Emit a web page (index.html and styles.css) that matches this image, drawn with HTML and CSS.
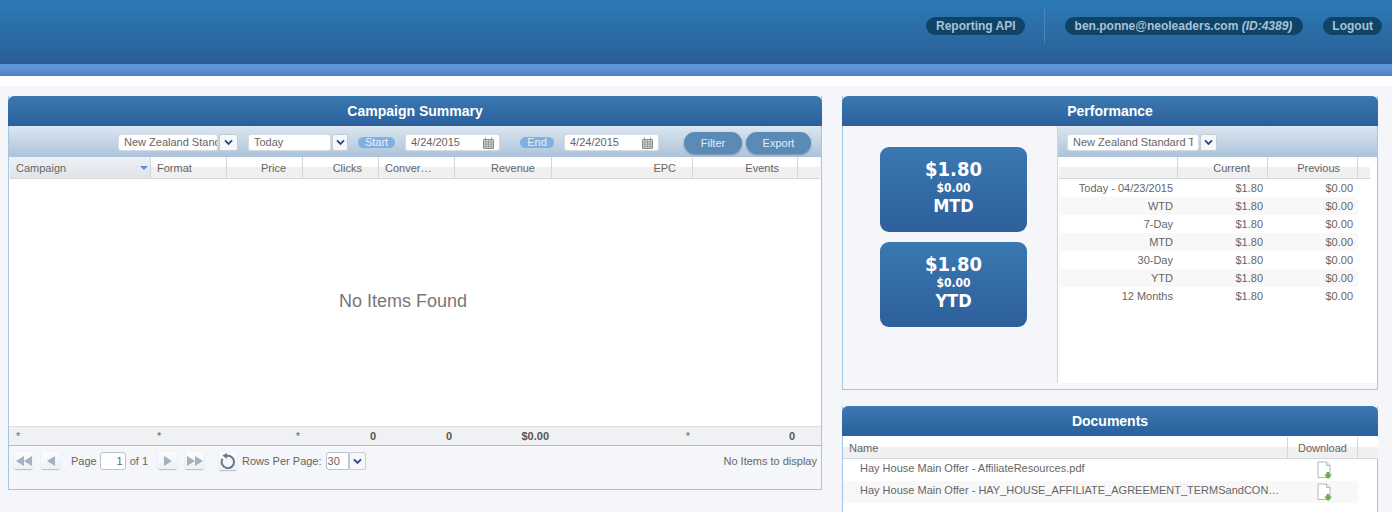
FILE: index.html
```html
<!DOCTYPE html>
<html lang="en">
<head>
<meta charset="utf-8">
<title>Dashboard</title>
<link rel="stylesheet" href="styles.css">
</head>
<body>
<svg class="defs" width="0" height="0" aria-hidden="true">
  <symbol id="chev" viewBox="0 0 10 8"><path d="M1 1.500l4 4 4-4" fill="none" stroke="#2b4a7e" stroke-width="2.200"/></symbol>
  <symbol id="cal" viewBox="0 0 11 12">
    <path d="M.5 2.500h10v9H.5z" fill="#d8d8d4" stroke="#8b9189"/>
    <path d="M2.500 0.500v2M8.500 0.500v2" stroke="#8b9189"/>
    <path d="M.5 5h10M.5 7.200h10M.5 9.400h10M3 3v8.500M5.500 3v8.500M8 3v8.500" stroke="#8b9189" stroke-width=".7"/>
  </symbol>
  <symbol id="doc" viewBox="0 0 16 19">
    <path d="M1 1h8.500l3.500 3.500V16.500H1z" fill="#fff" stroke="#b4b8b4"/>
    <path d="M9.500 1v3.500H13" fill="#f0f0f0" stroke="#b4b8b4"/>
    <path d="M9.500 11h3v2.500h2.500l-4 4.500-4-4.500h2.500z" fill="#6aaa4a"/>
  </symbol>
</svg>
<header class="topbar">
  <nav class="topnav">
    <a class="pill pill-api">Reporting API</a>
    <span class="topsep"></span>
    <a class="pill pill-user">ben.ponne@neoleaders.com <em>(ID:4389)</em></a>
    <a class="pill pill-last">Logout</a>
  </nav>
</header>
<div class="band"></div>
<div class="gap"></div>
<main class="page">
  <section class="panel panel-campaign">
    <h2 class="panel-title">Campaign Summary</h2>
    <div class="toolbar">
      <span class="select sel-tz"><span class="select-val">New Zealand Standard Time</span></span>
      <span class="drop drop-tz"><svg class="chev"><use href="#chev"/></svg></span>
      <span class="select sel-range"><span class="select-val">Today</span></span>
      <span class="drop drop-narrow"><svg class="chev"><use href="#chev"/></svg></span>
      <span class="tag tag-start">Start</span>
      <span class="date"><span>4/24/2015</span><svg class="cal"><use href="#cal"/></svg></span>
      <span class="tag tag-end">End</span>
      <span class="date"><span>4/24/2015</span><svg class="cal"><use href="#cal"/></svg></span>
      <button class="btn btn-filter">Filter</button>
      <button class="btn btn-export">Export</button>
    </div>
    <div class="grid-row grid-head">
      <div class="hcell hcell-sort">Campaign<i class="sort"></i></div>
      <div class="hcell">Format</div>
      <div class="hcell r">Price</div>
      <div class="hcell r">Clicks</div>
      <div class="hcell">Conver…</div>
      <div class="hcell r">Revenue</div>
      <div class="hcell r">EPC</div>
      <div class="hcell r hcell-events">Events</div>
      <div class="hcell hcell-end"></div>
    </div>
    <div class="empty">No Items Found</div>
    <div class="grid-row grid-foot">
      <div class="fcell star">*</div>
      <div class="fcell star">*</div>
      <div class="fcell star r">*</div>
      <div class="fcell r">0</div>
      <div class="fcell r">0</div>
      <div class="fcell r">$0.00</div>
      <div class="fcell star r">*</div>
      <div class="fcell r">0</div>
      <div class="fcell"></div>
    </div>
    <div class="pager">
      <span class="pg"><svg width="16" height="10" viewBox="0 0 16 10"><path d="M8 0v10L0 5zM16 0v10L8 5z" fill="#a3b1c2"/></svg></span>
      <span class="pg"><svg width="8" height="10" viewBox="0 0 8 10"><path d="M8 0v10L0 5z" fill="#a3b1c2"/></svg></span>
      <span class="pg-label">Page</span>
      <span class="pg-input">1</span>
      <span class="pg-of">of 1</span>
      <span class="pg"><svg width="8" height="10" viewBox="0 0 8 10"><path d="M0 0v10l8-5z" fill="#a3b1c2"/></svg></span>
      <span class="pg"><svg width="16" height="10" viewBox="0 0 16 10"><path d="M0 0v10l8-5zM8 0v10l8-5z" fill="#a3b1c2"/></svg></span>
      <span class="pg pg-refresh"><svg width="16" height="16" viewBox="0 0 16 16"><path d="M5.500 3.200a6.200 6.200 0 1 1-3 2.600" fill="none" stroke="#66788c" stroke-width="2"/><path d="M7 0v6L2.500 2.600z" fill="#66788c"/></svg></span>
      <span class="pg-rows">Rows Per Page:</span>
      <span class="pg-size">30</span>
      <span class="drop drop-size"><svg class="chev"><use href="#chev"/></svg></span>
      <span class="pg-info">No Items to display</span>
    </div>
  </section>

  <div class="side">
    <section class="panel panel-perf">
      <h2 class="panel-title">Performance</h2>
      <div class="perf-body">
        <div class="stats">
          <div class="stat"><b class="stat-main">$1.80</b><b class="stat-sub">$0.00</b><b class="stat-name">MTD</b></div>
          <div class="stat"><b class="stat-main">$1.80</b><b class="stat-sub">$0.00</b><b class="stat-name">YTD</b></div>
        </div>
        <div class="perf-table">
          <div class="toolbar toolbar-perf">
            <span class="select sel-perf"><span class="select-val">New Zealand Standard Time</span></span>
            <span class="drop"><svg class="chev"><use href="#chev"/></svg></span>
          </div>
          <div class="perf-row perf-head">
            <div class="hcell"></div>
            <div class="hcell r">Current</div>
            <div class="hcell r">Previous</div>
            <div class="hcell hcell-end"></div>
          </div>
          <div class="perf-row"><span>Today - 04/23/2015</span><span>$1.80</span><span>$0.00</span></div>
          <div class="perf-row alt"><span>WTD</span><span>$1.80</span><span>$0.00</span></div>
          <div class="perf-row"><span>7-Day</span><span>$1.80</span><span>$0.00</span></div>
          <div class="perf-row alt"><span>MTD</span><span>$1.80</span><span>$0.00</span></div>
          <div class="perf-row"><span>30-Day</span><span>$1.80</span><span>$0.00</span></div>
          <div class="perf-row alt"><span>YTD</span><span>$1.80</span><span>$0.00</span></div>
          <div class="perf-row"><span>12 Months</span><span>$1.80</span><span>$0.00</span></div>
        </div>
      </div>
    </section>

    <section class="panel panel-docs">
      <h2 class="panel-title">Documents</h2>
      <div class="doc-row doc-head">
        <div class="hcell">Name</div>
        <div class="hcell c">Download</div>
        <div class="hcell hcell-end"></div>
      </div>
      <div class="doc-row"><span class="doc-name">Hay House Main Offer - AffiliateResources.pdf</span><svg class="doc-ico"><use href="#doc"/></svg></div>
      <div class="doc-row alt"><span class="doc-name">Hay House Main Offer - HAY_HOUSE_AFFILIATE_AGREEMENT_TERMSandCONDITIONS.pdf</span><svg class="doc-ico"><use href="#doc"/></svg></div>
    </section>
  </div>
</main>
</body>
</html>
```

FILE: styles.css
```css
* { box-sizing: border-box; }
html, body { margin: 0; height: 512px; overflow: hidden; }
body {
  background: #f4f6fa;
  font: 11px/14px "Liberation Sans", Arial, sans-serif;
  color: #666;
}
.defs { display: block; height: 0; }

.topbar {
  height: 65px;
  background: linear-gradient(#2b7bb5, #2a5d98);
  border-bottom: 1px solid #5a92d2;
  display: flex;
  justify-content: flex-end;
}
.topnav { display: flex; align-items: flex-start; padding: 17px 10px 0 0; }
.pill {
  height: 18px;
  padding: 0 10px;
  border-radius: 9px;
  background: #0f4468;
  color: #a9c3d4;
  font-size: 12px;
  font-weight: bold;
  line-height: 18px;
  white-space: nowrap;
}
.pill em { font-style: italic; }
.pill-api { padding-right: 9px; }
.pill-user { padding: 0 11px 0 10px; }
.pill-last { margin-left: 20px; padding: 0 9px; }
.topsep { width: 1px; height: 35px; margin: -9px 20px 0 19px; background: #4b86b8; }
.band { height: 11px; background: linear-gradient(#6498da, #4d82c5); }
.gap { height: 10px; background: #fff; }

.page {
  display: grid;
  grid-template-columns: 814px 536px;
  column-gap: 20px;
  align-items: start;
  padding: 10px 14px 0 8px;
}
.side { display: flex; flex-direction: column; gap: 16px; }
.panel { border: 1px solid #a4c6e4; border-top: 0; background: #f4f6fa; }
.panel-title {
  margin: 0 -1px;
  height: 30px;
  border-radius: 6px 6px 0 0;
  background: linear-gradient(#3b79b2, #2a5f9b);
  color: #fff;
  font-size: 14px;
  line-height: 30px;
  font-weight: bold;
  text-align: center;
}
.panel-campaign { height: 394px; border-bottom-color: #aebfd4; }

.toolbar {
  height: 31px;
  padding: 8px 0 0 109px;
  display: flex;
  align-items: flex-start;
  background: linear-gradient(#dbe6f1, #adc3da);
}
.select, .date {
  height: 17px;
  background: #fff;
  border: 1px solid #d3dce6;
  border-radius: 3px;
  color: #666;
  line-height: 15px;
  overflow: hidden;
  white-space: nowrap;
}
.select { padding: 0 2px 0 5px; }
.select-val { display: block; overflow: hidden; }
.sel-tz { width: 100px; padding-right: 0; }
.sel-range { width: 83px; margin-left: 10px; }
.sel-perf { width: 132px; padding-right: 5px; }
.drop {
  width: 17px;
  height: 17px;
  margin-left: 1px;
  background: #f5f7f9;
  border: 1px solid #c4ccd6;
  border-radius: 2px;
  display: flex;
  align-items: center;
  justify-content: center;
}
.drop-tz { width: 19px; }
.drop-narrow { width: 16px; }
.chev { width: 9px; height: 7px; }
.tag {
  height: 11px;
  margin-top: 3px;
  border-radius: 6px;
  background: #7fb0e0;
  color: #e8f1fa;
  line-height: 11px;
  text-align: center;
}
.tag-start { width: 37px; margin-left: 10px; }
.tag-end { width: 34px; margin-left: 20px; }
.date {
  width: 95px;
  margin-left: 10px;
  padding: 0 5px;
  display: flex;
  justify-content: space-between;
  align-items: center;
}
.cal { width: 11px; height: 12px; }
.btn {
  height: 22px;
  margin-top: -2px;
  border: 0;
  border-radius: 11px;
  background: #5b8ab6;
  color: #e4edf5;
  font: 11px/22px "Liberation Sans", Arial, sans-serif;
  padding: 0;
  box-shadow: 0 1px 2px rgba(60, 90, 130, .5);
}
.btn-filter { width: 58px; margin-left: 25px; }
.btn-export { width: 65px; margin-left: 4px; }

.grid-row {
  display: grid;
  grid-template-columns: 141px 76px 76px 76px 76px 97px 141px 105px 1fr;
}
.grid-head { height: 22px; margin: 0 1px; width: 810px; }
.hcell {
  height: 22px;
  padding: 0 6px;
  line-height: 22px;
  font-size: 11px;
  white-space: nowrap;
  background: linear-gradient(#fff 0 50%, #f0f0f0 50% 100%);
  border-bottom: 1px solid #d4d8dc;
  border-right: 1px solid #d4d8dc;
  color: #666;
}
.hcell.r { padding-right: 16px; }
.hcell.hcell-events { padding-right: 18px; }
.perf-head .hcell.r { padding-right: 17px; }
.hcell-end { border-right: 0; }
.hcell-sort {
  background: linear-gradient(#eef1f5, #dfe4ea);
  display: flex;
  justify-content: space-between;
  align-items: center;
}
.sort {
  width: 0;
  height: 0;
  margin-right: -4px;
  border: 4px solid transparent;
  border-top: 4px solid #5b8fd0;
  border-bottom: 0;
}
.r { text-align: right; }
.c { text-align: center; }

.empty {
  height: 247px;
  background: #fff;
  display: flex;
  align-items: center;
  justify-content: center;
  font-size: 18px;
  color: #777;
  padding: 0 24px 4px 0;
}
.grid-foot {
  height: 20px;
  padding-left: 1px;
  background: #f0f1f2;
  border-top: 1px solid #dcdfe2;
  border-bottom: 1px solid #b4bcc6;
}
.fcell {
  padding: 0 3px 0 6px;
  line-height: 18px;
  font-weight: bold;
  color: #555;
}
.star { font-weight: normal; color: #666; }

.pager { display: flex; align-items: flex-start; padding: 6px 4px 0 5px; }
.pg {
  width: 19px;
  height: 17px;
  margin-right: 8px;
  background: linear-gradient(#fbfcfd, #eef1f5);
  border-radius: 2px;
  box-shadow: 0 1px 1px rgba(110, 130, 160, .5);
  display: flex;
  align-items: center;
  justify-content: center;
}
.pg-refresh { margin: 0 5px 0 7px; width: 18px; height: 18px; }
.pg-label { margin-left: 3px; line-height: 18px; }
.pg-input {
  width: 26px;
  height: 18px;
  margin-left: 3px;
  padding-right: 2px;
  background: #fff;
  border: 1px solid #b9c3ce;
  border-radius: 3px;
  line-height: 16px;
  text-align: right;
}
.pg-of { margin: 0 10px 0 4px; line-height: 18px; }
.pg-rows { line-height: 18px; }
.pg-size {
  width: 23px;
  height: 18px;
  margin-left: 4px;
  padding-left: 1px;
  background: #fff;
  border: 1px solid #b9c3ce;
  border-radius: 3px 0 0 3px;
  line-height: 16px;
}
.drop-size { height: 18px; margin-left: 0; }
.pg-info { margin-left: auto; line-height: 18px; }

.panel-perf { height: 294px; }
.perf-body { display: flex; height: 257px; }
.stats {
  width: 215px;
  flex: none;
  padding: 21px 0 0 37px;
  display: flex;
  flex-direction: column;
  gap: 10px;
  border-right: 1px solid #c9d5e2;
}
.stat {
  width: 147px;
  height: 85px;
  padding-top: 12px;
  border-radius: 9px;
  background: linear-gradient(#3a78b1, #2d5f9b);
  color: #fff;
  font-family: "DejaVu Sans Condensed", "DejaVu Sans", sans-serif;
  font-stretch: condensed;
  text-align: center;
  display: flex;
  flex-direction: column;
}
.stat-main { font-size: 20px; line-height: 21px; }
.stat-sub { font-size: 12px; line-height: 16px; }
.stat-name { font-size: 18px; line-height: 20px; }
.perf-table { flex: 1; background: #fff; }
.toolbar-perf { height: 31px; padding: 8px 0 0 9px; }
.perf-row {
  display: grid;
  grid-template-columns: 119px 90px 90px 10px;
  height: 18px;
  line-height: 18px;
  margin-left: 1px;
}
.perf-row span { padding-right: 5px; text-align: right; }
.perf-row.alt { background: linear-gradient(#f8f8f8, #f8f8f8) no-repeat; background-size: 299px 100%; }
.perf-head { height: 22px; }
.panel-docs { height: 130px; background: #fff; }
.doc-row {
  display: grid;
  grid-template-columns: 445px 70px 20px;
  height: 22px;
  line-height: 18px;
}
.doc-row.alt { background: linear-gradient(#f8f8f8, #f8f8f8) no-repeat; background-size: 515px 100%; }
.doc-head { height: 22px; margin-top: 1px; line-height: 22px; }
.doc-name {
  padding: 0 6px 0 17px;
  overflow: hidden;
  white-space: nowrap;
  text-overflow: ellipsis;
}
.doc-ico { width: 16px; height: 19px; margin: 2px 0 0 29px; }
```
